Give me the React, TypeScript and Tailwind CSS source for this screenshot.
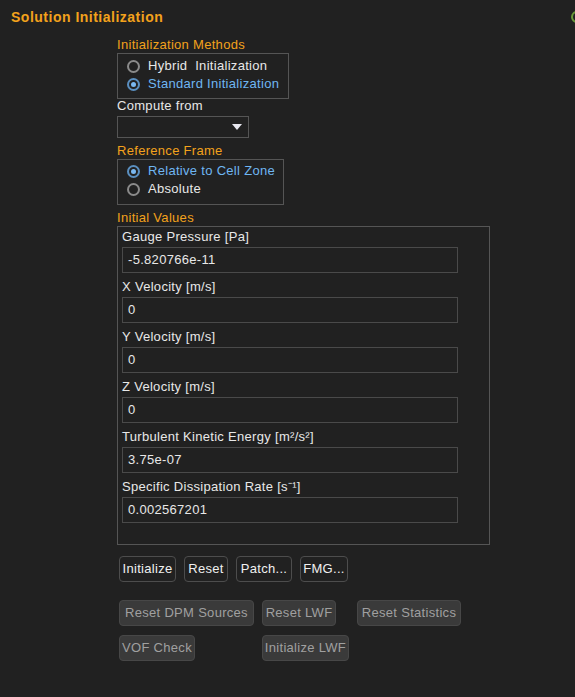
import React from "react";

const font = { fontFamily: '"Liberation Sans", "Noto Sans CJK KR", sans-serif' };

function Radio({ label, checked }: { label: string; checked?: boolean }) {
  return (
    <div className="flex items-center h-[18px]">
      <span
        className={`w-[13px] h-[13px] rounded-full border-2 flex items-center justify-center ml-[9px] mr-[8px] ${
          checked ? "border-[#5a8fc0]" : "border-[#8a8a8a]"
        }`}
      >
        {checked && <span className="w-[5px] h-[5px] rounded-full bg-[#7ab8f0]" />}
      </span>
      <span className={`whitespace-pre ${checked ? "text-[#6fb6f2]" : "text-[#e8e8e8]"}`}>{label}</span>
    </div>
  );
}

function Field({ label, value }: { label: string; value: string }) {
  return (
    <div className="flex flex-col">
      <div className="h-[20px] leading-[20px] text-[#e8e8e8]">{label}</div>
      <div className="w-[336px] h-[26px] border border-[#4a4a4a] bg-[#212121] px-[5px] leading-[24px] text-[#e8e8e8]">
        {value}
      </div>
    </div>
  );
}

function Btn({ label, disabled, w }: { label: string; disabled?: boolean; w: string }) {
  return (
    <div
      className={`h-[26px] ${w} rounded-[4px] border flex items-center justify-center whitespace-nowrap ${
        disabled
          ? "bg-[#3a3a3a] border-[#474747] text-[#a0a0a0]"
          : "bg-[#212121] border-[#4d4d4d] text-[#f0f0f0]"
      }`}
    >
      {label}
    </div>
  );
}

export default function App() {
  return (
    <div
      className="w-[575px] h-[697px] bg-[#212121] relative overflow-hidden text-[13px] tracking-[0.3px]"
      style={font}
    >
      <div className="pl-[11px] pt-[8px] h-[18px] box-content text-[14px] font-bold text-[#f3a21c] leading-[18px] tracking-[0.5px]">
        Solution Initialization
      </div>
      <span className="absolute right-[-8px] top-[11px] w-[12px] h-[12px] rounded-full border-2 border-[#6a9a3a]" />

      <div className="ml-[117px] mt-[11px] flex flex-col">
        <div className="text-[#f3a21c] leading-[16px]">Initialization Methods</div>
        <div className="w-[172px] h-[46px] border border-[#555] pt-[3px] flex flex-col">
          <Radio label="Hybrid  Initialization" />
          <Radio label="Standard Initialization" checked />
        </div>

        <div className="text-[#e8e8e8] leading-[16px] mt-[-1px]">Compute from</div>
        <div className="w-[132px] h-[22px] border border-[#555] mt-[2px] relative">
          <svg className="absolute right-[6px] top-[7px]" width="10" height="6" viewBox="0 0 10 6">
            <path d="M0 0h10L5 6z" fill="#e8e8f0" />
          </svg>
        </div>

        <div className="text-[#f3a21c] leading-[16px] mt-[5px]">Reference Frame</div>
        <div className="w-[167px] h-[46px] border border-[#555] pt-[2px] flex flex-col">
          <Radio label="Relative to Cell Zone" checked />
          <Radio label="Absolute" />
        </div>

        <div className="text-[#f3a21c] leading-[16px] mt-[5px]">Initial Values</div>
        <div className="w-[373px] h-[319px] border border-[#555] pl-[4px] flex flex-col gap-[4px]">
          <Field label="Gauge Pressure [Pa]" value="-5.820766e-11" />
          <Field label="X Velocity [m/s]" value="0" />
          <Field label="Y Velocity [m/s]" value="0" />
          <Field label="Z Velocity [m/s]" value="0" />
          <Field label="Turbulent Kinetic Energy [m²/s²]" value="3.75e-07" />
          <Field label="Specific Dissipation Rate [s⁻¹]" value="0.002567201" />
        </div>

        <div className="flex gap-[8px] mt-[11px] ml-[2px]">
          <Btn label="Initialize" w="w-[57px]" />
          <Btn label="Reset" w="w-[44px]" />
          <Btn label="Patch..." w="w-[56px]" />
          <Btn label="FMG..." w="w-[48px]" />
        </div>

        <div className="flex mt-[18px] ml-[2px]">
          <Btn label="Reset DPM Sources" w="w-[135px]" disabled />
          <div className="ml-[8px]">
            <Btn label="Reset LWF" w="w-[74px]" disabled />
          </div>
          <div className="ml-[21px]">
            <Btn label="Reset Statistics" w="w-[104px]" disabled />
          </div>
        </div>
        <div className="flex mt-[9px] ml-[2px]">
          <Btn label="VOF Check" w="w-[76px]" disabled />
          <div className="ml-[67px]">
            <Btn label="Initialize LWF" w="w-[87px]" disabled />
          </div>
        </div>
      </div>
    </div>
  );
}
